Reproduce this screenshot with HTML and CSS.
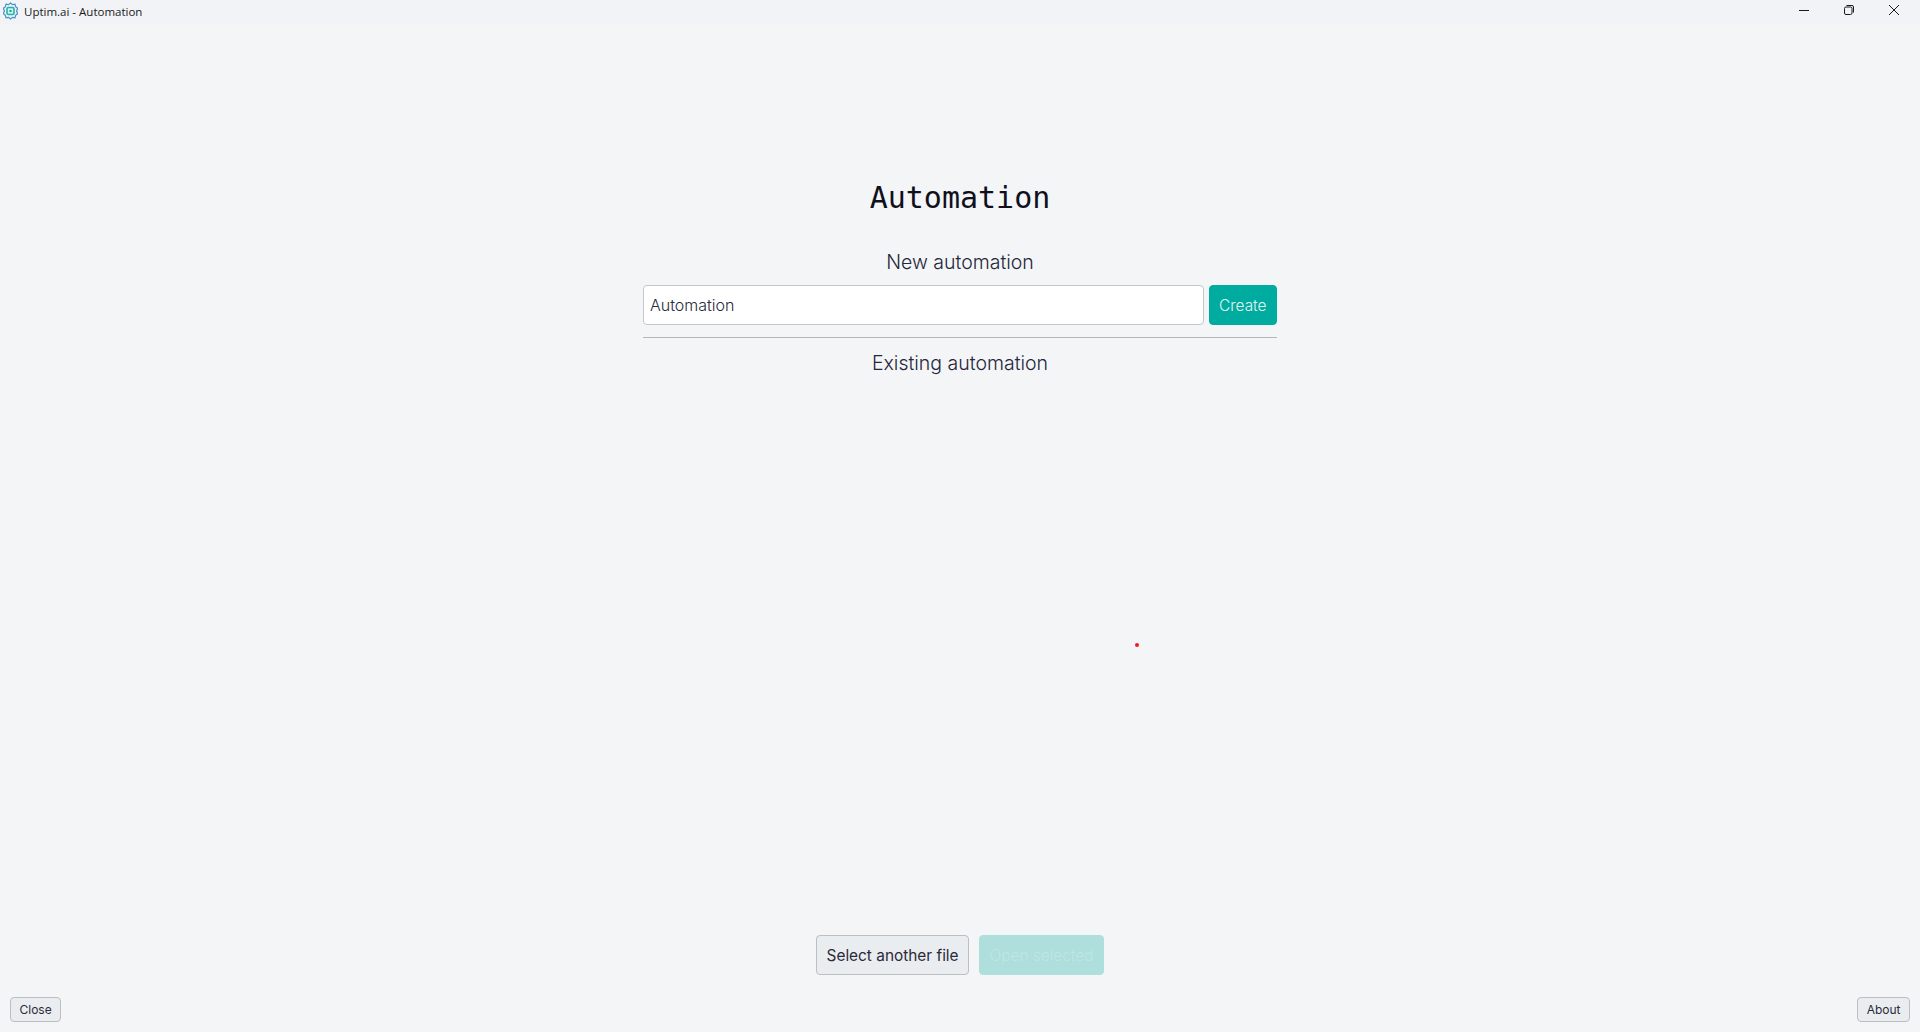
FILE: index.html
```html
<!DOCTYPE html>
<html lang="en">
<head>
    <meta charset="UTF-8">
    <title>Uptim.ai - Automation</title>
    <link rel="stylesheet" href="styles.css">
</head>
<body>
    <header class="titlebar">
        <div class="app-title">
            <svg class="app-icon" width="15" height="18" viewBox="0 0 15 18" fill="none">
                <path d="M7.500 1l2 1.700 2.500-.5.600 2.500 2 1.600-1 2.700 1 2.700-2 1.600-.6 2.500-2.500-.5-2 1.700-2-1.700-2.500.5-.6-2.500-2-1.600 1-2.700-1-2.700 2-1.600.6-2.500 2.500.5z" stroke="#4a90c4" stroke-width="1.200" fill="#eaf3f8"/>
                <rect x="4" y="5.500" width="7" height="7" rx="1.500" stroke="#1fb5a8" stroke-width="1.600" fill="#d3f0ec"/>
                <rect x="6.500" y="8" width="2" height="2" fill="#12a596"/>
            </svg>
            <span>Uptim.ai - Automation</span>
        </div>
        <div class="window-controls">
            <button class="win-btn" aria-label="Minimize">
                <svg width="12" height="12" viewBox="0 0 12 12"><path d="M1 6.500h10" stroke="#1a1a1a" stroke-width="1"/></svg>
            </button>
            <button class="win-btn" aria-label="Restore">
                <svg width="12" height="12" viewBox="0 0 12 12" fill="none" stroke="#1a1a1a" stroke-width="1"><rect x="1.500" y="3" width="7.500" height="7.500" rx="1.500"/><path d="M3.500 1.500h5.500a1.500 1.500 0 0 1 1.500 1.500v5.500"/></svg>
            </button>
            <button class="win-btn" aria-label="Close window">
                <svg width="12" height="12" viewBox="0 0 12 12"><path d="M1 1l10 10M11 1L1 11" stroke="#1a1a1a" stroke-width="1"/></svg>
            </button>
        </div>
    </header>

    <main class="content">
        <h1 class="page-title">Automation</h1>
        <div class="panel">
            <h2 class="section-title">New automation</h2>
            <div class="new-row">
                <input class="name-input" type="text" value="Automation">
                <button class="btn btn-primary">Create</button>
            </div>
            <hr class="divider">
            <h2 class="section-title">Existing automation</h2>
        </div>
        <div class="file-actions">
            <button class="btn btn-secondary">Select another file</button>
            <button class="btn btn-primary btn-disabled">Open selected</button>
        </div>
    </main>

    <footer class="footer">
        <button class="btn btn-secondary btn-small">Close</button>
        <button class="btn btn-secondary btn-small">About</button>
    </footer>

    <div class="red-dot"></div>
</body>
</html>
```
FILE: styles.css
```css
* {
    margin: 0;
    padding: 0;
    box-sizing: border-box;
}

body {
    background: #f3f5f7;
    color: #1d1d2b;
    font-family: 'Inter', 'Noto Sans', sans-serif;
    height: 100vh;
    overflow: hidden;
    display: flex;
    flex-direction: column;
}

.titlebar {
    height: 24px;
    background: #f1f3f6;
    display: flex;
    justify-content: space-between;
    align-items: flex-start;
}

.app-title {
    display: flex;
    align-items: center;
    height: 22px;
    padding-left: 3px;
    gap: 6px;
    font-family: 'Open Sans', sans-serif;
    font-size: 11.500px;
    color: #1a1a1a;
}

.window-controls {
    display: flex;
    gap: 33px;
    padding: 4px 20px 0 0;
}

.win-btn {
    width: 12px;
    height: 12px;
    border: none;
    background: none;
    display: flex;
}

.content {
    flex: 1;
    display: flex;
    flex-direction: column;
    align-items: center;
}

.page-title {
    font-family: 'DejaVu Sans Mono', monospace;
    font-weight: 400;
    font-size: 30px;
    line-height: 40px;
    margin-top: 154px;
    color: #10101c;
}

.panel {
    width: 634px;
    flex: 1;
    margin-top: 30px;
}

.section-title {
    font-size: 19.500px;
    font-weight: 300;
    line-height: 28px;
    text-align: center;
    color: #26263a;
}

.new-row {
    display: flex;
    gap: 5px;
    margin-top: 9px;
}

.name-input {
    flex: 1;
    height: 40px;
    border: 1px solid #c4c6c9;
    border-radius: 4px;
    background: #fff;
    padding: 0 6px;
    font-family: inherit;
    font-size: 16px;
    font-weight: 300;
    color: #2a2a3a;
}

.btn {
    height: 40px;
    padding: 0 9.500px;
    border-radius: 4px;
    font-family: inherit;
    font-size: 15.400px;
    font-weight: 300;
}

.btn-primary {
    background: #00ab9f;
    border: 1px solid #00ab9f;
    color: #e4f6f4;
}

.btn-disabled {
    background: #aedfdc;
    border-color: #aedfdc;
    color: #bfe6e3;
}

.btn-secondary {
    background: #eaedf0;
    border: 1px solid #bcbec1;
    color: #2a2a3a;
    font-weight: 400;
}

.btn-small {
    height: 25px;
    padding: 0 8.500px;
    font-size: 12px;
}

.divider {
    border: none;
    border-top: 1px solid #b4b6b8;
    margin: 12px 0 11px;
}

.file-actions {
    display: flex;
    gap: 10px;
    margin-bottom: 22px;
}

.footer {
    display: flex;
    justify-content: space-between;
    padding: 0 10px 10px;
}

.red-dot {
    position: absolute;
    left: 1135px;
    top: 643px;
    width: 4px;
    height: 4px;
    border-radius: 50%;
    background: #ee1c25;
}
```
